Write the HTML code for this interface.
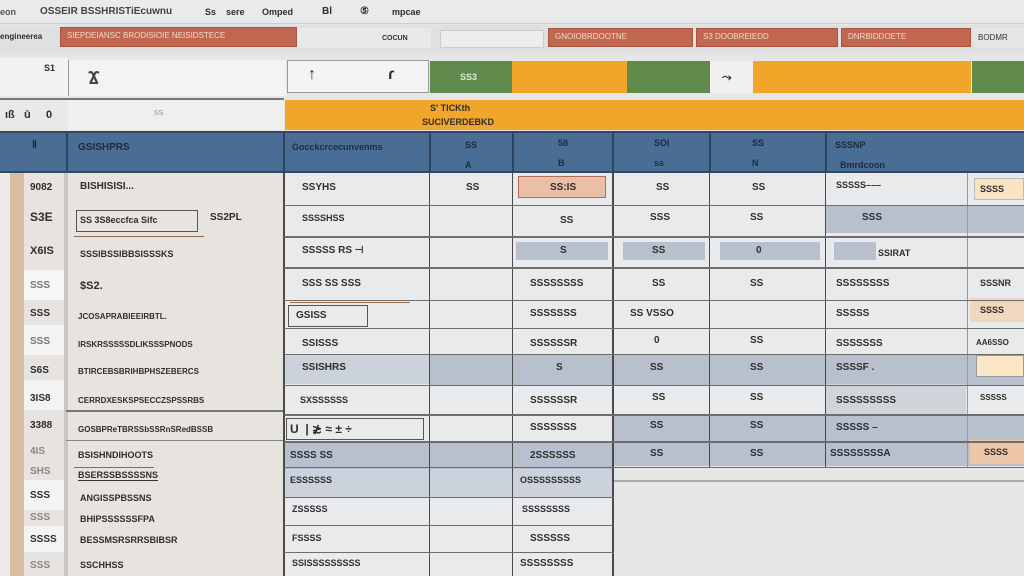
<!DOCTYPE html>
<html><head><meta charset="utf-8"><style>
*{margin:0;padding:0;box-sizing:border-box}
body{width:1024px;height:576px;overflow:hidden;background:#e6e6e6;font-family:"Liberation Sans",sans-serif;position:relative;font-size:10px;color:#333}
.a{position:absolute}
.t{position:absolute;white-space:nowrap;font-size:10px;color:#2e2e2e;font-weight:bold}
.red{background:#c2674f;color:#f0d8cc;font-size:8px;padding:3px 6px;border:1px solid #a95440}
.or{background:#f1a52a}.gr{background:#5f8a4c}
.hl{position:absolute;height:1px;background:#6d6d6d}
.vl{position:absolute;width:2px;background:#4a4a4a}
.c{position:absolute;background:#b7c0cc}
</style></head><body>
<div class="a" style="left:0;top:0;width:1024px;height:24px;background:#e9eaeb;border-bottom:1px solid #d0d0d0"></div>
<div class="t" style="left:0;top:7px;font-size:9px;color:#555">eon</div>
<div class="t" style="left:40px;top:6px;font-size:10px;color:#444">OSSEIR BSSHRISTiEcuwnu</div>
<div class="t" style="left:205px;top:7px;font-size:9px">Ss</div>
<div class="t" style="left:226px;top:7px;font-size:9px">sere</div>
<div class="t" style="left:262px;top:7px;font-size:9px">Omped</div>
<div class="t" style="left:322px;top:6px;font-size:10px">Bl</div>
<div class="t" style="left:360px;top:6px;font-size:10px">⑤</div>
<div class="t" style="left:392px;top:7px;font-size:9px">mpcae</div>
<div class="a" style="left:0;top:25px;width:1024px;height:28px;background:#dfe0e2"></div>
<div class="t" style="left:0;top:32px;font-size:8px">engineerea</div>
<div class="a red" style="left:60px;top:27px;width:237px;height:20px">SIEPDEIANSC BRODISIOIE NEISIDSTECE</div>
<div class="a" style="left:297px;top:28px;width:134px;height:20px;background:#e8e9ea"></div>
<div class="t" style="left:382px;top:35px;font-size:7px">COCUN</div>
<div class="a" style="left:440px;top:30px;width:104px;height:18px;background:#eceded;border:1px solid #ccc"></div>
<div class="a red" style="left:548px;top:28px;width:145px;height:19px">GNOIOBRDOOTNE</div>
<div class="a red" style="left:696px;top:28px;width:142px;height:19px">S3 DOOBREIEDD</div>
<div class="a red" style="left:841px;top:28px;width:130px;height:19px">DNRBIDDOETE</div>
<div class="a" style="left:974px;top:28px;width:50px;height:20px;background:#e4e5e6;font-size:8px;padding:5px 4px">BODMR</div>
<div class="a" style="left:0;top:58px;width:68px;height:38px;background:#f2f2f2"></div>
<div class="a" style="left:68px;top:60px;width:218px;height:36px;background:#f3f3f3;border-left:1px solid #999"></div>
<div class="t" style="left:88px;top:68px;font-size:18px;color:#444">Ϫ</div>
<div class="t" style="left:44px;top:63px;font-size:9px">S1</div>
<div class="a" style="left:287px;top:60px;width:142px;height:33px;background:#f3f3f3;border:1px solid #999"></div>
<div class="t" style="left:308px;top:66px;font-size:16px">↑</div>
<div class="t" style="left:388px;top:66px;font-size:16px">ɾ</div>
<div class="a gr" style="left:430px;top:61px;width:82px;height:32px"></div>
<div class="t" style="left:460px;top:72px;color:#dfe8d5;font-size:9px">SS3</div>
<div class="a or" style="left:512px;top:61px;width:115px;height:32px"></div>
<div class="a gr" style="left:627px;top:61px;width:83px;height:32px"></div>
<div class="a" style="left:710px;top:61px;width:43px;height:32px;background:#f0f0f0"></div>
<div class="t" style="left:722px;top:70px;font-size:12px">⤳</div>
<div class="a or" style="left:753px;top:61px;width:85px;height:32px"></div>
<div class="a or" style="left:838px;top:61px;width:133px;height:32px"></div>
<div class="a gr" style="left:972px;top:61px;width:52px;height:32px"></div>
<div class="a" style="left:0;top:98px;width:68px;height:32px;background:#e9e9e9;border-top:2px solid #777"></div>
<div class="a" style="left:68px;top:98px;width:216px;height:32px;background:#efefef;border-top:2px solid #777"></div>
<div class="t" style="left:154px;top:110px;font-size:7px;color:#aaa">SS</div>
<div class="t" style="left:5px;top:109px;font-size:11px">ıß &nbsp; ū &nbsp; &nbsp;&nbsp;0</div>
<div class="a or" style="left:285px;top:100px;width:739px;height:30px"></div>
<div class="t" style="left:430px;top:103px;font-size:9px">S' TICKth</div>
<div class="t" style="left:422px;top:117px;font-size:9px">SUCIVERDEBKD</div>
<div class="a" style="left:0;top:131px;width:1024px;height:42px;background:#4a6d95;border-top:2px solid #33475f;border-bottom:2px solid #33475f"></div>
<div class="t" style="left:78px;top:142px;font-size:10px;color:#1e2b3a">GSISHPRS</div>
<div class="t" style="left:32px;top:140px;font-size:10px;color:#1e2b3a">Ⅱ</div>
<div class="t" style="left:292px;top:142px;font-size:9px;color:#1e2b3a">Gocckcrcecunvenms</div>
<div class="t" style="left:465px;top:140px;font-size:9px;color:#1e2b3a">SS<br><br>A</div>
<div class="t" style="left:558px;top:138px;font-size:9px;color:#1e2b3a">58<br><br>B</div>
<div class="t" style="left:654px;top:138px;font-size:9px;color:#1e2b3a">SOI<br><br>ss</div>
<div class="t" style="left:752px;top:138px;font-size:9px;color:#1e2b3a">SS<br><br>N</div>
<div class="t" style="left:835px;top:140px;font-size:9px;color:#1e2b3a">SSSNP<br><br>&nbsp;&nbsp;Bmrdcoon</div>
<div class="vl" style="left:66px;top:132px;height:40px;background:#2f445e"></div>
<div class="vl" style="left:283px;top:132px;height:40px;background:#2f445e"></div>
<div class="vl" style="left:429px;top:132px;height:40px;background:#2f445e"></div>
<div class="vl" style="left:512px;top:132px;height:40px;background:#2f445e"></div>
<div class="vl" style="left:612px;top:132px;height:40px;background:#2f445e"></div>
<div class="vl" style="left:709px;top:132px;height:40px;background:#2f445e"></div>
<div class="vl" style="left:825px;top:132px;height:40px;background:#2f445e"></div>
<div class="a" style="left:0;top:173px;width:10px;height:403px;background:#ecebea"></div>
<div class="a" style="left:10px;top:173px;width:14px;height:403px;background:#d8bd9e"></div>
<div class="a" style="left:24px;top:173px;width:40px;height:403px;background:#e6e3e0"></div>
<div class="a" style="left:24px;top:270px;width:40px;height:30px;background:#f6f6f6"></div>
<div class="a" style="left:24px;top:325px;width:40px;height:30px;background:#f3f3f3"></div>
<div class="a" style="left:24px;top:380px;width:40px;height:30px;background:#f3f3f3"></div>
<div class="a" style="left:24px;top:480px;width:40px;height:30px;background:#f3f3f3"></div>
<div class="a" style="left:24px;top:526px;width:40px;height:26px;background:#f3f3f3"></div>
<div class="a" style="left:64px;top:173px;width:4px;height:403px;background:#c9c6c2"></div>
<div class="a" style="left:68px;top:173px;width:215px;height:403px;background:#e7e3de"></div>
<div class="a" style="left:66px;top:410px;width:218px;height:2px;background:#777"></div>
<div class="a" style="left:66px;top:440px;width:218px;height:1px;background:#888"></div>
<div class="t" style="left:30px;top:182px">9082</div>
<div class="t" style="left:30px;top:210px;font-size:12px">S3E</div>
<div class="t" style="left:30px;top:245px;font-size:11px">X6IS</div>
<div class="t" style="left:30px;top:280px;color:#777">SSS</div>
<div class="t" style="left:30px;top:308px">SSS</div>
<div class="t" style="left:30px;top:336px;color:#777">SSS</div>
<div class="t" style="left:30px;top:365px">S6S</div>
<div class="t" style="left:30px;top:393px">3IS8</div>
<div class="t" style="left:30px;top:420px">3388</div>
<div class="t" style="left:30px;top:446px;color:#888">4IS</div>
<div class="t" style="left:30px;top:466px;color:#888">SHS</div>
<div class="t" style="left:30px;top:490px">SSS</div>
<div class="t" style="left:30px;top:512px;color:#888">SSS</div>
<div class="t" style="left:30px;top:534px">SSSS</div>
<div class="t" style="left:30px;top:560px;color:#888">SSS</div>
<div class="t" style="left:80px;top:181px">BISHISISI...</div>
<div class="a" style="left:76px;top:210px;width:122px;height:22px;border:1px solid #555"></div>
<div class="a" style="left:74px;top:236px;width:130px;height:1px;background:#8b6a55"></div>
<div class="t" style="left:80px;top:215px;font-size:9px">SS 3S8eccfca Sifc</div>
<div class="t" style="left:210px;top:212px">SS2PL</div>
<div class="t" style="left:80px;top:249px;font-size:9px">SSSIBSSIBBSISSSKS</div>
<div class="t" style="left:80px;top:280px;font-size:11px">$S2.</div>
<div class="t" style="left:78px;top:312px;font-size:8px">JCOSAPRABIEEIRBTL.</div>
<div class="t" style="left:78px;top:340px;font-size:8px">IRSKRSSSSSDLIKSSSPNODS</div>
<div class="t" style="left:78px;top:367px;font-size:8px">BTIRCEBSBRIHBPHSZEBERCS</div>
<div class="t" style="left:78px;top:396px;font-size:8px">CERRDXESKSPSECCZSPSSRBS</div>
<div class="t" style="left:78px;top:425px;font-size:8px">GOSBPReTBRSSbSSRnSRedBSSB</div>
<div class="t" style="left:78px;top:450px;font-size:9px">BSISHNDIHOOTS</div>
<div class="t" style="left:78px;top:470px;font-size:9px;border-bottom:1px solid #333">BSERSSBSSSSNS</div>
<div class="a" style="left:74px;top:467px;width:80px;height:1px;background:#8b6a55"></div>
<div class="t" style="left:80px;top:493px;font-size:9px">ANGISSPBSSNS</div>
<div class="t" style="left:80px;top:514px;font-size:9px">BHIPSSSSSSFPA</div>
<div class="t" style="left:80px;top:535px;font-size:9px">BESSMSRSRRSBIBSR</div>
<div class="t" style="left:80px;top:560px;font-size:9px">SSCHHSS</div>
<div class="a" style="left:284px;top:173px;width:740px;height:293px;background:#e9eaec"></div>
<div class="a" style="left:284px;top:441px;width:329px;height:135px;background:#e9eaec"></div>
<div class="a" style="left:612px;top:470px;width:412px;height:12px;background:#e6e6e6;border-bottom:2px solid #aaa"></div>
<div class="c" style="left:285px;top:354px;width:146px;height:30px;background:#ccd2da"></div>
<div class="c" style="left:430px;top:354px;width:594px;height:31px"></div>
<div class="c" style="left:612px;top:414px;width:412px;height:52px"></div>
<div class="c" style="left:285px;top:441px;width:327px;height:28px"></div>
<div class="c" style="left:285px;top:469px;width:327px;height:28px;background:#cbd2db"></div>
<div class="c" style="left:826px;top:205px;width:198px;height:28px"></div>
<div class="c" style="left:516px;top:242px;width:92px;height:18px"></div>
<div class="c" style="left:623px;top:242px;width:82px;height:18px"></div>
<div class="c" style="left:720px;top:242px;width:100px;height:18px"></div>
<div class="c" style="left:834px;top:242px;width:42px;height:18px"></div>
<div class="c" style="left:826px;top:384px;width:140px;height:30px;background:#d0d5dc"></div>
<div class="a" style="left:518px;top:176px;width:88px;height:22px;background:#ebbfa5;border:1px solid #b06d53"></div>
<div class="a" style="left:974px;top:178px;width:50px;height:22px;background:#f7e4c3;border:1px solid #bbb"></div>
<div class="a" style="left:970px;top:298px;width:54px;height:24px;background:#efd8bd"></div>
<div class="a" style="left:976px;top:355px;width:48px;height:22px;background:#f8e6c6;border:1px solid #999"></div>
<div class="a" style="left:970px;top:440px;width:54px;height:24px;background:#edc7a8"></div>
<div class="vl" style="left:283px;top:173px;height:403px"></div>
<div class="vl" style="left:429px;top:173px;height:403px;width:1px"></div>
<div class="vl" style="left:512px;top:173px;height:403px;width:1px"></div>
<div class="vl" style="left:612px;top:173px;height:403px;width:2px"></div>
<div class="vl" style="left:709px;top:173px;height:295px;width:1px"></div>
<div class="vl" style="left:825px;top:173px;height:295px;width:1px"></div>
<div class="vl" style="left:967px;top:173px;height:295px;width:1px;background:#999"></div>
<div class="hl" style="left:284px;top:205px;width:740px"></div>
<div class="hl" style="left:284px;top:236px;width:740px;height:2px"></div>
<div class="hl" style="left:284px;top:267px;width:740px;height:2px"></div>
<div class="hl" style="left:284px;top:300px;width:740px"></div>
<div class="hl" style="left:284px;top:328px;width:740px"></div>
<div class="hl" style="left:284px;top:354px;width:740px"></div>
<div class="hl" style="left:284px;top:385px;width:740px"></div>
<div class="hl" style="left:284px;top:414px;width:740px;height:2px"></div>
<div class="hl" style="left:284px;top:441px;width:740px;height:2px"></div>
<div class="hl" style="left:284px;top:467px;width:740px"></div>
<div class="hl" style="left:284px;top:497px;width:330px"></div>
<div class="hl" style="left:284px;top:525px;width:330px"></div>
<div class="hl" style="left:284px;top:552px;width:330px"></div>
<div class="a" style="left:288px;top:305px;width:80px;height:22px;border:1px solid #555"></div>
<div class="a" style="left:290px;top:302px;width:120px;height:1px;background:#9b6d4b"></div>
<div class="a" style="left:286px;top:418px;width:138px;height:22px;border:1px solid #555"></div>
<div class="t" style="left:302px;top:182px">SSYHS</div>
<div class="t" style="left:302px;top:213px;font-size:9px">SSSSHSS</div>
<div class="t" style="left:302px;top:245px">SSSSS RS ⊣</div>
<div class="t" style="left:302px;top:278px">SSS SS SSS</div>
<div class="t" style="left:296px;top:310px">GSISS</div>
<div class="t" style="left:302px;top:338px">SSISSS</div>
<div class="t" style="left:302px;top:362px">SSISHRS</div>
<div class="t" style="left:300px;top:395px;font-size:9px">SXSSSSSS</div>
<div class="t" style="left:290px;top:422px;font-size:12px">U &nbsp;| ≵ ≈ ± ÷</div>
<div class="t" style="left:290px;top:450px">SSSS SS</div>
<div class="t" style="left:290px;top:475px;font-size:9px">ESSSSSS</div>
<div class="t" style="left:292px;top:504px;font-size:9px">ZSSSSS</div>
<div class="t" style="left:292px;top:533px;font-size:9px">FSSSS</div>
<div class="t" style="left:292px;top:558px;font-size:9px">SSISSSSSSSSS</div>
<div class="t" style="left:466px;top:182px">SS</div>
<div class="t" style="left:550px;top:182px">SS:IS</div>
<div class="t" style="left:560px;top:215px">SS</div>
<div class="t" style="left:560px;top:245px">S</div>
<div class="t" style="left:530px;top:278px">SSSSSSSS</div>
<div class="t" style="left:530px;top:308px">SSSSSSS</div>
<div class="t" style="left:530px;top:338px">SSSSSSR</div>
<div class="t" style="left:556px;top:362px">S</div>
<div class="t" style="left:530px;top:395px">SSSSSSR</div>
<div class="t" style="left:530px;top:422px">SSSSSSS</div>
<div class="t" style="left:530px;top:450px">2SSSSSS</div>
<div class="t" style="left:520px;top:475px;font-size:9px">OSSSSSSSSS</div>
<div class="t" style="left:522px;top:504px;font-size:9px">SSSSSSSS</div>
<div class="t" style="left:530px;top:533px">SSSSSS</div>
<div class="t" style="left:520px;top:558px">SSSSSSSS</div>
<div class="t" style="left:656px;top:182px">SS</div>
<div class="t" style="left:650px;top:212px">SSS</div>
<div class="t" style="left:652px;top:245px">SS</div>
<div class="t" style="left:652px;top:278px">SS</div>
<div class="t" style="left:630px;top:308px">SS VSSO</div>
<div class="t" style="left:654px;top:335px">0</div>
<div class="t" style="left:650px;top:362px">SS</div>
<div class="t" style="left:652px;top:392px">SS</div>
<div class="t" style="left:650px;top:420px">SS</div>
<div class="t" style="left:650px;top:448px">SS</div>
<div class="t" style="left:752px;top:182px">SS</div>
<div class="t" style="left:750px;top:212px">SS</div>
<div class="t" style="left:756px;top:245px">0</div>
<div class="t" style="left:750px;top:278px">SS</div>
<div class="t" style="left:750px;top:335px">SS</div>
<div class="t" style="left:750px;top:362px">SS</div>
<div class="t" style="left:750px;top:392px">SS</div>
<div class="t" style="left:750px;top:420px">SS</div>
<div class="t" style="left:750px;top:448px">SS</div>
<div class="t" style="left:836px;top:180px;font-size:9px">SSSSS–––</div>
<div class="t" style="left:862px;top:212px">SSS</div>
<div class="t" style="left:878px;top:248px;font-size:9px">SSIRAT</div>
<div class="t" style="left:836px;top:278px">SSSSSSSS</div>
<div class="t" style="left:836px;top:308px">SSSSS</div>
<div class="t" style="left:836px;top:338px">SSSSSSS</div>
<div class="t" style="left:836px;top:362px">SSSSF .</div>
<div class="t" style="left:836px;top:395px">SSSSSSSSS</div>
<div class="t" style="left:836px;top:422px">SSSSS –</div>
<div class="t" style="left:830px;top:448px">SSSSSSSSA</div>
<div class="t" style="left:980px;top:184px;font-size:9px">SSSS</div>
<div class="t" style="left:980px;top:278px;font-size:9px">SSSNR</div>
<div class="t" style="left:980px;top:305px;font-size:9px">SSSS</div>
<div class="t" style="left:976px;top:338px;font-size:8px">AA6SSO</div>
<div class="t" style="left:980px;top:393px;font-size:8px">SSSSS</div>
<div class="t" style="left:984px;top:447px;font-size:9px">SSSS</div>
</body></html>
